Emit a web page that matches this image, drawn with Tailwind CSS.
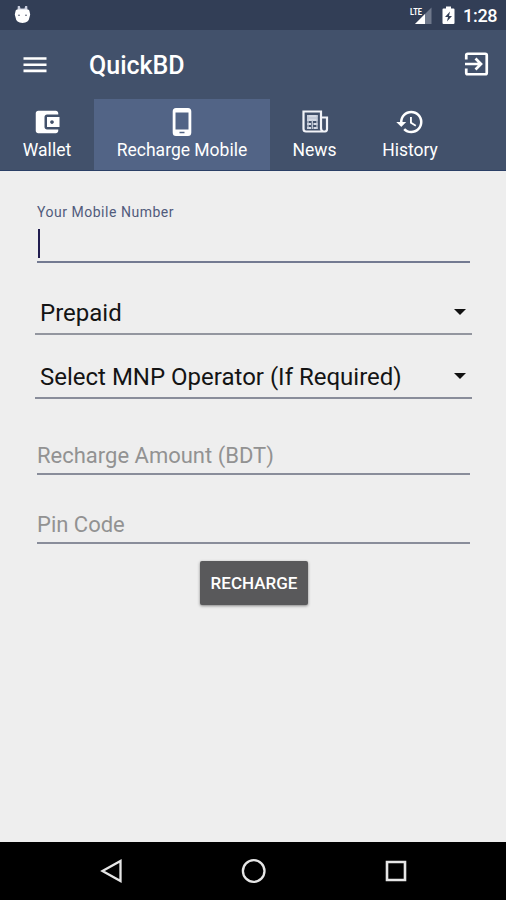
<!DOCTYPE html>
<html lang="en">
<head>
  <meta charset="UTF-8" />
  <meta name="viewport" content="width=device-width, initial-scale=1.0" />
  <title>QuickBD</title>
  <script src="https://cdn.jsdelivr.net/npm/@tailwindcss/browser@4"></script>
</head>
<body class="bg-[#eeeeee] font-['Roboto',sans-serif]">
<div class="flex h-[900px] w-[506px] flex-col overflow-hidden">

  <!-- Status bar -->
  <div class="flex h-[30px] shrink-0 items-center justify-between bg-[#323e56] pl-[14px] pr-[9px] text-white">
    <svg class="h-[20px] w-[17px]" viewBox="0 0 17 20" fill="#fff">
      <path d="M3.800 1h2l.7 2.500h4l.7-2.500h2l.3 4.500h-10z" fill="#c9cede"/>
      <path d="M1.500 6.200Q1.500 4.500 3.300 4.500h10.400q1.800 0 1.800 1.700l.7 3.300-.7 2.700q-.7 5.500-7 5.800-6.300-.3-7-5.800L.8 9.500z"/>
      <circle cx="5" cy="10.300" r=".8" fill="#444c62"/><circle cx="12" cy="10.300" r=".8" fill="#444c62"/>
    </svg>
    <div class="flex items-center">
      <svg class="mr-[9px] h-[20px] w-[24px]" viewBox="0 0 24 20">
        <path d="M22.500 2.500V19H6z" fill="#6f788b"/>
        <path d="M16 9v10H6z" fill="#fff"/>
        <text x="1" y="9.500" font-size="9.500" font-weight="700" textLength="12" lengthAdjust="spacingAndGlyphs" fill="#fff">LTE</text>
      </svg>
      <svg class="mr-[8px] h-[20px] w-[13px]" viewBox="0 0 13 20">
        <path d="M4 1.500h5v2h2.500q1 0 1 1v13.500q0 1-1 1h-10q-1 0-1-1V4.500q0-1 1-1H4z" fill="#fff"/>
        <path d="M8 6.500L3 12h3l-1 4.500L10 11H7z" fill="#323e56"/>
      </svg>
      <span class="block w-[34px] whitespace-nowrap pt-px text-[18px] font-medium leading-[20px] tracking-[-0.3px]">1:28</span>
    </div>
  </div>

  <!-- Toolbar -->
  <header class="flex h-[69px] shrink-0 items-center bg-[#42516b] pl-[23px] pr-[17px] text-white">
    <svg class="h-[18px] w-[24px]" viewBox="0 0 24 18" fill="#fff">
      <path d="M.5 1.200h23v2.600H.5zM.5 7.400h23v2.600H.5zM.5 13.600h23v2.600H.5z"/>
    </svg>
    <h1 class="ml-[42px] flex-1 pt-[2px] text-[25px] font-medium leading-[30px]">QuickBD</h1>
    <svg class="h-[25px] w-[25px]" viewBox="0 0 25 25" fill="none" stroke="#fff" stroke-width="2.700">
      <path d="M2.250 7.500V3.250q0-1.500 1.500-1.500h17.500q1.500 0 1.500 1.500v17.500q0 1.500-1.500 1.500H3.750q-1.500 0-1.500-1.500V16.500"/>
      <path d="M1 12h15M11.500 6.500L17 12l-5.500 5.500"/>
    </svg>
  </header>

  <!-- Tabs -->
  <nav class="flex h-[72px] shrink-0 border-b border-[#2b3f66] bg-[#42516b] text-[17.5px] leading-[20px] text-white">
    <div class="flex w-[94px] flex-col items-center pt-[8px]">
      <svg class="h-[30px] w-[30px]" viewBox="0 0 24 24" fill="#fff">
        <path d="M21 18v1c0 1.100-.9 2-2 2H5c-1.110 0-2-.9-2-2V5c0-1.100.89-2 2-2h14c1.100 0 2 .9 2 2v1h-9c-1.110 0-2 .9-2 2v8c0 1.100.89 2 2 2h9zm-9-2h10V8H12v8zm4-2.500c-.83 0-1.500-.67-1.500-1.500s.67-1.500 1.500-1.500 1.500.67 1.500 1.500-.67 1.500-1.500 1.500z"/>
      </svg>
      <span class="mt-[3px]">Wallet</span>
    </div>
    <div class="flex w-[176px] flex-col items-center bg-[#526486] pt-[8px]">
      <svg class="h-[30px] w-[30px]" viewBox="0 0 30 30">
        <path fill="#fff" fill-rule="evenodd" d="M9 1h12Q24.300 1 24.300 4.500v21q0 3.500-3.300 3.500H9Q5.700 29 5.700 25.500v-21Q5.700 1 9 1zM8.500 5.500v17h13v-17zM12.500 24.800v1.400h5v-1.400z"/>
      </svg>
      <span class="mt-[3px] whitespace-nowrap">Recharge Mobile</span>
    </div>
    <div class="flex w-[89px] flex-col items-center pt-[8px]">
      <svg class="h-[30px] w-[30px]" viewBox="0 0 30 30" fill="none" stroke="#f1f3f8" stroke-width="2.200">
        <path d="M21 22.500V4.500H3.500V22q0 2.500 2.500 2.500H25q2-.2 2-2.500V10.500h-6M21 21q.2 3 2.200 3.300"/>
        <path d="M7 8.500h10.500v4H7z" fill="#c3cad8" stroke="none"/>
        <path d="M7 9h10.500M7 13h10.500M7 17h4M13.500 17h4M7 21h4M13.500 21h4" stroke="#d5dae5" stroke-width="1.800"/>
        <path d="M8 8v14M12.300 13v9M17 8v14" stroke="#c3cad8" stroke-width="1.300"/>
      </svg>
      <span class="mt-[3px]">News</span>
    </div>
    <div class="flex w-[102px] flex-col items-center pt-[8px]">
      <svg class="h-[30px] w-[30px]" viewBox="0 0 24 24" fill="#fff">
        <path d="M13 3a9 9 0 0 0-9 9H1l3.890 3.890.07.14L9 12H6c0-3.870 3.130-7 7-7s7 3.130 7 7-3.130 7-7 7c-1.930 0-3.680-.79-4.940-2.060l-1.420 1.420A8.954 8.954 0 0 0 13 21a9 9 0 0 0 0-18zm-1 5v5l4.280 2.540.72-1.210-3.500-2.080V8H12z"/>
      </svg>
      <span class="mt-[3px]">History</span>
    </div>
  </nav>

  <!-- Recharge form -->
  <main class="flex flex-1 flex-col bg-[#eeeeee] pl-[35px] pr-[34px] pt-[32px]">
    <div class="mx-[2px]">
      <label class="block text-[14px] leading-[18px] tracking-[0.52px] text-[#515b7c]">Your Mobile Number</label>
      <div class="flex h-[42px] border-b-2 border-[#737a91] pt-[8px]">
        <span class="ml-px h-[29px] w-[2px] bg-[#211d4f]"></span>
      </div>
    </div>

    <div class="mt-[28px] flex h-[44px] items-center justify-between border-b-2 border-[#93969f] pl-[5px] pr-[6px] text-[24px] text-[#141414]">
      <span class="pt-px">Prepaid</span>
      <svg class="h-[6px] w-[12px]" viewBox="0 0 12 6"><path d="M0 0h12L6 6z" fill="#111"/></svg>
    </div>

    <div class="mt-[20px] flex h-[44px] items-center justify-between border-b-2 border-[#898d9a] pl-[5px] pr-[6px] text-[24px] text-[#141414]">
      <span class="pt-px">Select MNP Operator (If Required)</span>
      <svg class="h-[6px] w-[12px]" viewBox="0 0 12 6"><path d="M0 0h12L6 6z" fill="#111"/></svg>
    </div>

    <div class="mx-[2px] mt-[36px] flex h-[40px] items-center border-b-2 border-[#898d9a] text-[22px] text-[#929292]">
      <span class="pt-[2px]">Recharge Amount (BDT)</span>
    </div>

    <div class="mx-[2px] mt-[29px] flex h-[40px] items-center border-b-2 border-[#898d9a] text-[22px] text-[#929292]">
      <span class="pt-[2px]">Pin Code</span>
    </div>

    <button class="mt-[17px] ml-[165px] h-[44px] w-[108px] rounded-[2px] bg-[#59595b] pt-[2px] text-[17px] font-medium text-white shadow-[0_1px_3px_rgba(0,0,0,0.45)]">RECHARGE</button>
  </main>

  <!-- Navigation bar -->
  <footer class="flex h-[58px] shrink-0 items-center justify-between bg-black pl-[100px] pr-[98px]">
    <svg class="h-[26px] w-[24px]" viewBox="0 0 24 26" fill="none" stroke="#e6e6e6" stroke-width="2.300"><path d="M20.500 3v20L2.500 13z"/></svg>
    <svg class="h-[26px] w-[26px]" viewBox="0 0 26 26" fill="none" stroke="#e6e6e6" stroke-width="2.300"><circle cx="12.700" cy="13" r="10.800"/></svg>
    <svg class="h-[26px] w-[24px]" viewBox="0 0 24 26" fill="none" stroke="#e6e6e6" stroke-width="2.600"><path d="M3 4h18v18H3z"/></svg>
  </footer>

</div>
</body>
</html>
